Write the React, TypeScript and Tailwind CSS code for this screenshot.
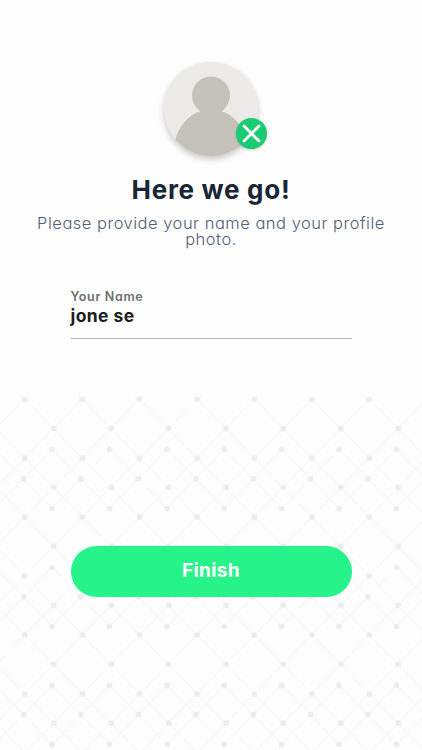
import { useState } from 'react';

const STEP_X = 57.4;
const STEP_Y = 58.95;
const columns = Array.from({ length: 10 }, (_, i) => i - 1);

// Two lattices: a continuous one, and bands of small diamonds laid over it
function LatticeBackground() {
  return (
    <svg
      className="absolute inset-x-0 bottom-0 h-[356px] w-full"
      viewBox="0 394 422 356"
      fill="none"
      aria-hidden="true"
    >
      <g stroke="#f0f2f6" strokeWidth="0.9">
        {columns.map((c) => {
          const x = 24.8 + c * STEP_X;
          return [0, 1, 2, 3, 4, 5, 6].map((r) => {
            const y = 399 + r * STEP_Y;
            return (
              <path
                key={`${c}-${r}`}
                d={`M${x} ${y}l28.7 29.48M${x} ${y}l-28.7 29.48M${x} ${y}l28.7 -29.48M${x} ${y}l-28.7 -29.48`}
              />
            );
          });
        })}
        {columns.map((c) =>
          [449.3, 567.3, 685.3].map((y) => (
            <path
              key={`${c}-${y}`}
              d={`M${52.1 + c * STEP_X} ${y}l28.8 29.4l-28.8 29.6l-28.6 -29.6z`}
            />
          ))
        )}
      </g>
      <g fill="#e9ecf1">
        {columns.map((c) => (
          <g key={c}>
            {[0, 1, 2, 3, 4, 5].map((r) => (
              <g key={r}>
                <circle cx={24.8 + c * STEP_X} cy={399.2 + r * STEP_Y} r="2.8" />
                <circle cx={53.8 + c * STEP_X} cy={428.4 + r * STEP_Y} r="2.8" />
              </g>
            ))}
            {[449.5, 567.5, 685.4].map((y) => (
              <g key={y}>
                <circle cx={52.1 + c * STEP_X} cy={y} r="2.8" />
                <circle cx={23.6 + c * STEP_X} cy={y + 29.2} r="2.8" />
                <circle cx={52.1 + c * STEP_X} cy={y + 59} r="2.8" />
              </g>
            ))}
          </g>
        ))}
      </g>
    </svg>
  );
}

function Avatar() {
  return (
    <div className="relative size-[94px] rounded-full bg-[#ecebe8] shadow-[0_3px_6px_rgba(0,0,0,0.22)]">
      <svg className="size-full rounded-full" viewBox="0 0 94 94" aria-hidden="true">
        <g fill="#c5c2bc">
          <circle cx="47" cy="33.5" r="19" />
          <path d="M11.5 77C15 64 24 53 37 49Q47 46 57 49C70 53 79 64 82.5 77L82 94H12z" />
        </g>
      </svg>
      <button
        type="button"
        aria-label="Remove photo"
        className="absolute top-[56px] left-[72px] flex size-[31px] items-center justify-center rounded-full bg-[#1acb73] shadow-[0_1px_3px_rgba(0,0,0,0.2)]"
      >
        <svg className="size-[31px]" viewBox="0 0 31 31" fill="none">
          <path d="M8 8l15 15M23 8L8 23" stroke="#fff" strokeWidth="2.8" strokeLinecap="round" />
        </svg>
      </button>
    </div>
  );
}

export default function App() {
  const [name, setName] = useState('jone se');

  return (
    <div className="relative isolate h-[750px] w-full overflow-hidden bg-[#fefefe] font-['Inter',sans-serif] [font-feature-settings:'cv11']">
      <div className="absolute inset-0 -z-10">
        <LatticeBackground />
      </div>

      <main className="flex flex-col items-center pt-[62px]">
        <Avatar />

        <h1 className="mt-[18px] text-[26px] leading-8 font-bold tracking-[0.7px] whitespace-nowrap text-[#182635]">
          Here we go!
        </h1>
        <p className="mt-[9px] text-center text-[16.5px] leading-4 font-light tracking-[0.5px] whitespace-nowrap text-[#4f6077]">
          Please provide your name and your profile
          <br />
          photo.
        </p>

        <label className="mt-[42px] flex w-[281px] flex-col border-b border-[#b5b5b5]">
          <span className="text-[12.5px] leading-4 font-semibold tracking-[0.65px] text-[#6e6e6e]">
            Your Name
          </span>
          <input
            className="-ml-1 h-[33px] w-[285px] bg-transparent pb-[12px] indent-[4px] text-[17.5px] leading-5 font-bold tracking-[0.4px] text-[#1c1c1c] outline-none"
            value={name}
            onChange={(e) => setName(e.target.value)}
          />
        </label>

        <button
          type="button"
          className="mt-[207px] h-[51px] w-[281px] rounded-full bg-[#26f48b] pb-[1px] text-[19px] font-bold tracking-[0.4px] text-white"
        >
          Finish
        </button>
      </main>
    </div>
  );
}
